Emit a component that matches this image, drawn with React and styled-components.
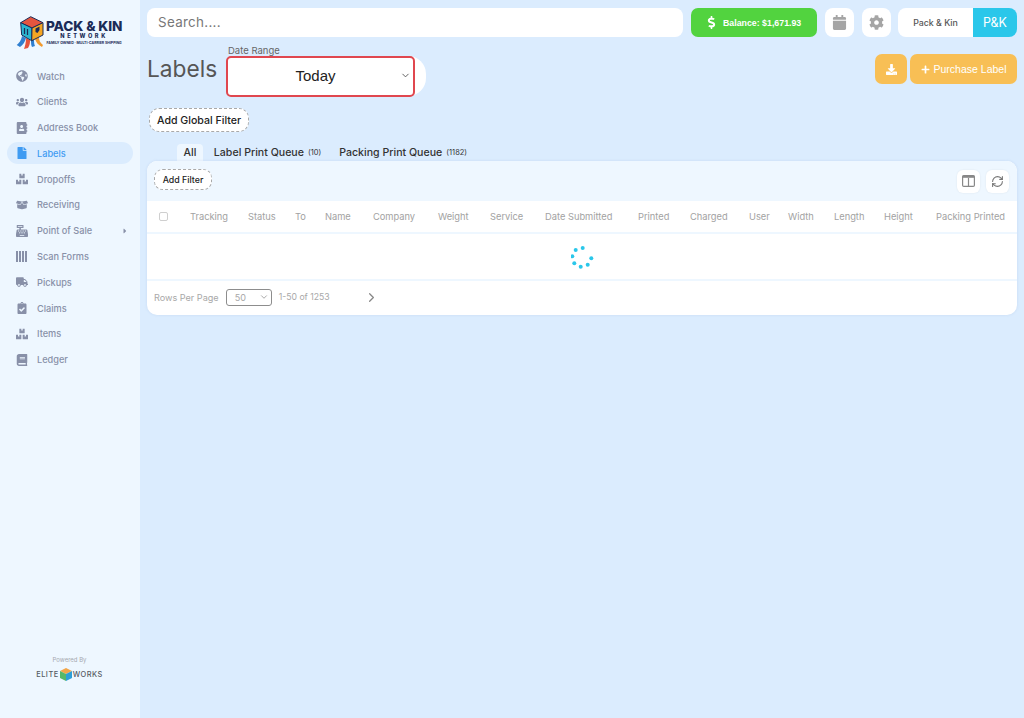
import React from 'react';
import styled, { createGlobalStyle } from 'styled-components';
import {
  FaGlobeAmericas, FaUsers, FaAddressBook, FaFile, FaBoxes, FaBoxOpen, FaCashRegister,
  FaTruck, FaClipboardCheck, FaBook, FaDollarSign, FaCalendar, FaCog, FaDownload, FaPlus,
  FaCaretRight,
} from 'react-icons/fa';
import { LuRefreshCw, LuChevronDown, LuChevronRight } from 'react-icons/lu';

const Global = createGlobalStyle`
  html, body { margin: 0; padding: 0; height: 100%; }
  body { font-family: Inter, "Liberation Sans", sans-serif; background: #dbecfe; color: #333; }
  * { box-sizing: border-box; }
`;

const Page = styled.div`
  display: flex;
  height: 718px;
  overflow: hidden;
`;

const Sidebar = styled.aside`
  width: 140px;
  flex: none;
  background: #eef7ff;
  display: flex;
  flex-direction: column;
  padding: 16px 7px 37px;
`;

const LogoRow = styled.div`
  display: flex;
  align-items: flex-start;
  padding-left: 9px;
  height: 49px;
`;

const LogoText = styled.div`
  display: flex;
  flex-direction: column;
  align-items: center;
  padding-top: 3px;
  color: #1b2b57;
`;

const LogoTitle = styled.div`
  font-size: 13.6px;
  font-weight: 800;
  line-height: 14px;
  letter-spacing: -0.1px;
  white-space: nowrap;
`;

const LogoSub = styled.div`
  font-size: 5.6px;
  font-weight: 800;
  letter-spacing: 2.6px;
  line-height: 6px;
`;

const LogoTag = styled.div`
  font-size: 3.5px;
  font-weight: 700;
  line-height: 5px;
  margin-top: 2px;
  white-space: nowrap;
`;

const Nav = styled.nav`
  display: flex;
  flex-direction: column;
  gap: 3.8px;
`;

const NavItem = styled.div`
  display: flex;
  align-items: center;
  height: 22px;
  border-radius: 11px;
  padding-left: 8px;
  font-size: 9.2px;
  font-weight: 500;
  color: ${p => (p.$active ? '#3f9bf2' : '#8890a8')};
  background: ${p => (p.$active ? '#dbecfe' : 'transparent')};
`;

const NavIcon = styled.span`
  width: 14px;
  display: flex;
  justify-content: center;
  font-size: 12px;
  margin-right: 8px;
`;

const NavCaret = styled.span`
  margin-left: auto;
  margin-right: 4px;
  display: flex;
  font-size: 8px;
`;

const Barcode = styled.span`
  width: 12px;
  height: 11px;
  background: repeating-linear-gradient(90deg, #8890a8 0 2px, transparent 2px 3px);
`;

const Powered = styled.div`
  margin-top: auto;
  display: flex;
  flex-direction: column;
  align-items: center;
  gap: 5px;
  padding-right: 1px;
`;

const PoweredLabel = styled.div`
  font-size: 6px;
  color: #a6a9b0;
`;

const EliteRow = styled.div`
  display: flex;
  align-items: center;
  gap: 1px;
  font-size: 7.4px;
  font-weight: 500;
  letter-spacing: 0.5px;
  color: #555a62;
`;

const Main = styled.main`
  flex: 1;
  min-width: 0;
  padding: 8px 7px 0;
  display: flex;
  flex-direction: column;
`;

const TopBar = styled.div`
  display: flex;
  align-items: stretch;
  height: 29px;
`;

const Search = styled.div`
  width: 536px;
  background: #fff;
  border-radius: 8px;
  display: flex;
  align-items: center;
  padding: 0 0 2px 11px;
  font-size: 13.4px;
  letter-spacing: 0.3px;
  color: #777;
`;

const Balance = styled.div`
  width: 126px;
  margin-left: 8px;
  background: #52d33f;
  border-radius: 7px;
  display: flex;
  align-items: center;
  padding-left: 14px;
  gap: 5px;
  color: #fff;
  font-family: "Liberation Sans", sans-serif;
  font-weight: 700;
  font-size: 8.8px;
  svg { font-size: 13px; }
`;

const IconTile = styled.div`
  width: 29px;
  margin-left: 8px;
  background: #fff;
  border-radius: 8px;
  display: flex;
  align-items: center;
  justify-content: center;
  color: #a5a5a5;
  font-size: 15px;
`;

const Account = styled.div`
  width: 119px;
  margin-left: 7px;
  display: flex;
  border-radius: 8px;
  overflow: hidden;
`;

const AccountName = styled.div`
  flex: 1;
  background: #fff;
  display: flex;
  align-items: center;
  justify-content: center;
  font-size: 8.8px;
  font-weight: 500;
  color: #555;
`;

const AccountBadge = styled.div`
  width: 44px;
  background: #2ac7ea;
  color: #fff;
  display: flex;
  align-items: center;
  justify-content: center;
  font-size: 12.5px;
`;

const TitleRow = styled.div`
  display: flex;
  align-items: flex-start;
  margin-top: 9px;
  height: 62px;
`;

const PageTitle = styled.h1`
  margin: 8px 0 0;
  font-size: 22.7px;
  font-weight: 400;
  line-height: 30px;
  color: #565656;
  width: 79px;
`;

const RangeField = styled.div`
  display: flex;
  flex-direction: column;
`;

const RangeLabel = styled.div`
  font-size: 9.5px;
  line-height: 9px;
  padding-left: 2px;
  color: #666;
  height: 10px;
`;

const RangePill = styled.div`
  width: 200px;
  height: 40px;
  background: #fff;
  border-radius: 18px;
`;

const RangeSelect = styled.div`
  width: 189px;
  height: 41px;
  border: 2px solid #e0474f;
  border-radius: 5px;
  background: #fff;
  display: flex;
  align-items: center;
  justify-content: center;
  padding: 0 10px 3px 0;
  position: relative;
  font-family: "Liberation Sans", sans-serif;
  font-size: 15px;
  color: #222;
  svg { position: absolute; right: 2px; top: 12px; font-size: 11px; color: #555; }
`;

const Actions = styled.div`
  margin-left: auto;
  margin-top: 8px;
  display: flex;
  gap: 3px;
  height: 30px;
`;

const OrangeButton = styled.div`
  width: ${p => p.$w}px;
  background: #f8bf55;
  border-radius: 7px;
  color: #fff;
  display: flex;
  align-items: center;
  justify-content: center;
  gap: 4px;
  font-family: "Liberation Sans", sans-serif;
  font-size: 10.5px;
  svg { font-size: ${p => p.$icon}px; }
`;

const DashedButton = styled.div`
  display: flex;
  align-items: center;
  justify-content: center;
  width: ${p => p.$w}px;
  height: ${p => p.$h}px;
  margin-bottom: ${p => p.$lift || 0}px;
  background: #fff;
  border: 1px dashed #a9a9a9;
  border-radius: ${p => p.$h / 2.4}px;
  font-size: ${p => p.$size}px;
  font-weight: 500;
  color: #222;
`;

const GlobalFilterRow = styled.div`
  display: flex;
  padding-left: 2px;
  height: 24px;
`;

const Tabs = styled.div`
  display: flex;
  align-items: stretch;
  margin-top: 12px;
  padding-left: 30px;
  height: 17px;
`;

const Tab = styled.div`
  display: flex;
  align-items: center;
  gap: 4px;
  font-size: 10.6px;
  font-weight: 500;
  color: #333;
  padding: 0 ${p => p.$pad}px;
  border-radius: 4px 4px 0 0;
  background: ${p => (p.$active ? '#eef7ff' : 'transparent')};
  small { font-size: 7.5px; font-weight: 400; }
`;

const Card = styled.section`
  height: 154px;
  border-radius: 10px;
  background: #fff;
  overflow: hidden;
  box-shadow: 0 0 3px rgba(120, 150, 200, 0.2);
  display: flex;
  flex-direction: column;
`;

const Toolbar = styled.div`
  height: 40px;
  flex: none;
  background: #eef7ff;
  display: flex;
  align-items: center;
  justify-content: space-between;
  padding: 0 8px 0 7px;
`;

const ToolGroup = styled.div`
  display: flex;
  gap: 6px;
`;

const ToolIcon = styled.div`
  width: 23px;
  height: 23px;
  background: #fff;
  border-radius: 6px;
  display: flex;
  align-items: center;
  justify-content: center;
  color: #777;
  font-size: 13px;
  box-shadow: 0 0 2px rgba(0, 0, 0, 0.08);
`;

const HeaderRow = styled.div`
  height: 33px;
  flex: none;
  display: grid;
  grid-template-columns: 43px 58px 47px 30px 48px 65px 52px 55px 93px 52px 59px 39px 46px 50px 52px auto;
  align-items: center;
  border-bottom: 2px solid #eef7ff;
  font-size: 9.3px;
  color: #a2a2a2;
  white-space: nowrap;
`;

const HeadCheck = styled.span`
  width: 9px;
  height: 9px;
  margin-left: 12px;
  border: 1px solid #cfcfcf;
  border-radius: 2px;
`;

const LoadingRow = styled.div`
  height: 47px;
  flex: none;
  display: flex;
  align-items: center;
  justify-content: center;
  padding-left: 2px;
  border-bottom: 2px solid #eef7ff;
`;

const Footer = styled.div`
  flex: 1;
  display: flex;
  align-items: center;
  padding: 0 0 2px 7px;
  font-size: 9.1px;
  color: #a8a8a8;
`;

const RowsSelect = styled.div`
  width: 46px;
  height: 17px;
  margin-left: 7px;
  border: 1px solid #8d8d8d;
  border-radius: 3px;
  display: flex;
  align-items: center;
  justify-content: space-between;
  padding: 0 2px 0 8px;
  svg { font-size: 10px; color: #999; }
`;

const PageCount = styled.span`
  margin-left: 7px;
  width: 85px;
  font-size: 8.7px;
`;

const NextPage = styled.span`
  display: flex;
  font-size: 15px;
  color: #888;
`;

const navItems = [
  { label: 'Watch', icon: <FaGlobeAmericas /> },
  { label: 'Clients', icon: <FaUsers /> },
  { label: 'Address Book', icon: <FaAddressBook /> },
  { label: 'Labels', icon: <FaFile />, active: true },
  { label: 'Dropoffs', icon: <FaBoxes /> },
  { label: 'Receiving', icon: <FaBoxOpen /> },
  { label: 'Point of Sale', icon: <FaCashRegister />, caret: true },
  { label: 'Scan Forms', icon: <Barcode /> },
  { label: 'Pickups', icon: <FaTruck /> },
  { label: 'Claims', icon: <FaClipboardCheck /> },
  { label: 'Items', icon: <FaBoxes /> },
  { label: 'Ledger', icon: <FaBook /> },
];

const columns = ['Tracking', 'Status', 'To', 'Name', 'Company', 'Weight', 'Service', 'Date Submitted',
  'Printed', 'Charged', 'User', 'Width', 'Length', 'Height', 'Packing Printed'];

const spinnerDots = [[3.7, 4], [10.7, 2], [19.3, 12.3], [15.7, 18.7], [8.7, 20.7], [2.3, 17.3], [0.3, 10.3]];

const CubeLogo = () => (
  <svg width="30" height="36" viewBox="0 0 30 36">
    <path d="M6 20 C5 25 3 27 0.7 29 L4 31 C7 29 9 26 10 22Z" fill="#2f7fd0" />
    <path d="M10 22 C10 27 9 30 8 33 L12 32 C14 29 14 26 14 24Z" fill="#e4553f" />
    <path d="M15 24 C15 27 15 29 16 31 L19 30 C18 28 18 26 18 23Z" fill="#2f7fd0" />
    <path d="M19 23 C20 26 22 29 26 31 L27 29 C24 27 23 24 23 21Z" fill="#f29a2e" />
    <path d="M14.7 0.7 L27 6.7 L16 12 L4.7 6.7Z" fill="#e4553f" stroke="#1b2b57" strokeWidth="1" strokeLinejoin="round" />
    <path d="M4.7 6.7 L16 12 L15.7 24.7 L5.7 19Z" fill="#2bb5cf" stroke="#1b2b57" strokeWidth="1" strokeLinejoin="round" />
    <path d="M16 12 L27 6.7 L27 19 L15.7 24.7Z" fill="#f6a623" stroke="#1b2b57" strokeWidth="1" strokeLinejoin="round" />
    <path d="M8.5 12 v6 M11.5 13 v6" stroke="#1b2b57" strokeWidth="1.2" />
    <path d="M19.5 12.5 l4 -2 v3.5 l-2 3 -2 -1Z" fill="#1b2b57" />
  </svg>
);

const EliteCube = () => (
  <svg width="12" height="13" viewBox="0 0 12 13">
    <path d="M6 0 L12 3 L6 6 L0 3Z" fill="#f3a64a" />
    <path d="M0 3 L6 6 L6 13 L0 10Z" fill="#57b86a" />
    <path d="M12 3 L6 6 L6 13 L12 10Z" fill="#2f9fd8" />
  </svg>
);

// column picker glyph: outlined box with a heavy top band and a centre divider
const ColumnsIcon = () => (
  <svg width="13" height="12" viewBox="0 0 13 12">
    <rect x="0.6" y="0.6" width="11.8" height="10.8" rx="1.2" fill="none" stroke="#888" strokeWidth="1.2" />
    <rect x="0.6" y="0.6" width="11.8" height="2.2" fill="#888" />
    <path d="M6.5 3 V11" stroke="#888" strokeWidth="1.2" />
  </svg>
);

const App = () => (
  <Page>
    <Global />
    <Sidebar>
      <LogoRow>
        <CubeLogo />
        <LogoText>
          <LogoTitle>PACK &amp; KIN</LogoTitle>
          <LogoSub>NETWORK</LogoSub>
          <LogoTag>FAMILY OWNED · MULTI-CARRIER SHIPPING</LogoTag>
        </LogoText>
      </LogoRow>
      <Nav>
        {navItems.map(item => (
          <NavItem key={item.label} $active={item.active}>
            <NavIcon>{item.icon}</NavIcon>
            {item.label}
            {item.caret && <NavCaret><FaCaretRight /></NavCaret>}
          </NavItem>
        ))}
      </Nav>
      <Powered>
        <PoweredLabel>Powered By</PoweredLabel>
        <EliteRow>ELITE <EliteCube /> WORKS</EliteRow>
      </Powered>
    </Sidebar>
    <Main>
      <TopBar>
        <Search>Search....</Search>
        <Balance><FaDollarSign /> Balance: $1,671.93</Balance>
        <IconTile><FaCalendar /></IconTile>
        <IconTile><FaCog /></IconTile>
        <Account>
          <AccountName>Pack &amp; Kin</AccountName>
          <AccountBadge>P&amp;K</AccountBadge>
        </Account>
      </TopBar>
      <TitleRow>
        <PageTitle>Labels</PageTitle>
        <RangeField>
          <RangeLabel>Date Range</RangeLabel>
          <RangePill>
            <RangeSelect>Today<LuChevronDown /></RangeSelect>
          </RangePill>
        </RangeField>
        <Actions>
          <OrangeButton $w={32} $icon={11}><FaDownload /></OrangeButton>
          <OrangeButton $w={107} $icon={9}><FaPlus /> Purchase Label</OrangeButton>
        </Actions>
      </TitleRow>
      <GlobalFilterRow>
        <DashedButton $w={100} $h={24} $size={10.6}>Add Global Filter</DashedButton>
      </GlobalFilterRow>
      <Tabs>
        <Tab $active $pad={6.5}>All</Tab>
        <Tab $pad={11}>Label Print Queue <small>(10)</small></Tab>
        <Tab $pad={7}>Packing Print Queue <small>(1182)</small></Tab>
      </Tabs>
      <Card>
        <Toolbar>
          <DashedButton $w={58} $h={21} $size={8.8} $lift={4}>Add Filter</DashedButton>
          <ToolGroup>
            <ToolIcon><ColumnsIcon /></ToolIcon>
            <ToolIcon><LuRefreshCw /></ToolIcon>
          </ToolGroup>
        </Toolbar>
        <HeaderRow>
          <HeadCheck />
          {columns.map(c => <span key={c}>{c}</span>)}
        </HeaderRow>
        <LoadingRow>
          <svg width="24" height="24" viewBox="0 0 24 24">
            {spinnerDots.map(([x, y]) => <circle key={x} cx={x + 1} cy={y + 1} r="2" fill="#2ac7ea" />)}
          </svg>
        </LoadingRow>
        <Footer>
          Rows Per Page
          <RowsSelect>50<LuChevronDown /></RowsSelect>
          <PageCount>1-50 of 1253</PageCount>
          <NextPage><LuChevronRight /></NextPage>
        </Footer>
      </Card>
    </Main>
  </Page>
);

export default App;
